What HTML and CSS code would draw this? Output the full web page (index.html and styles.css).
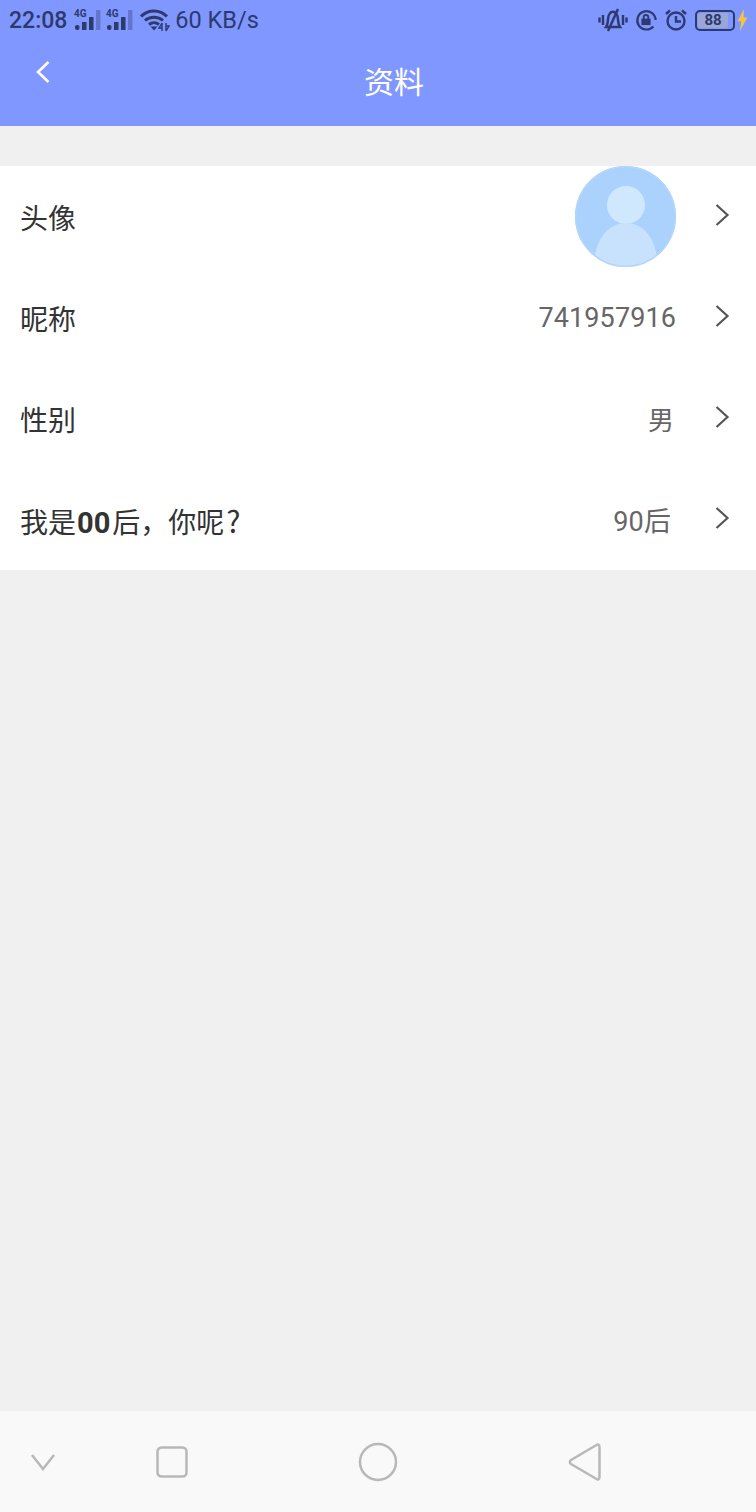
FILE: index.html
```html
<!DOCTYPE html>
<html lang="zh-CN">
<head>
<meta charset="UTF-8" />
<meta name="viewport" content="width=device-width, initial-scale=1" />
<title>资料</title>
<link rel="stylesheet" href="styles.css">
</head>
<body>

<header class="top">
  <div class="status">
    <span class="time">22:08</span>
    <svg class="sig" width="27" height="24" viewBox="0 0 27 24">
      <text x="0" y="9" class="sig-label">4G</text>
      <rect x="1" y="17" width="4.500" height="5" rx="2"/>
      <rect x="8" y="14" width="4.500" height="8"/>
      <rect x="15" y="9" width="4.500" height="13"/>
      <rect x="22" y="2" width="4.500" height="20" opacity=".35"/>
    </svg>
    <svg class="sig" width="27" height="24" viewBox="0 0 27 24">
      <text x="0" y="9" class="sig-label">4G</text>
      <rect x="1" y="17" width="4.500" height="5" rx="2"/>
      <rect x="8" y="14" width="4.500" height="8"/>
      <rect x="15" y="9" width="4.500" height="13"/>
      <rect x="22" y="2" width="4.500" height="20" opacity=".35"/>
    </svg>
    <svg class="wifi" width="30" height="24" viewBox="0 0 30 24">
      <path d="M1 8.500C8 1 20 1 27 8.500M5 12.500C10 8 18 8 23 12.500M9 16.500C12 14 16 14 19 16.500" fill="none" stroke="#2c3a6e" stroke-width="3"/>
      <path d="M10.500 18.500L17.500 18.500L14 22.500Z" fill="#2c3a6e"/>
      <path d="M22 15V23M22 15L19 20H22M26 15V23M26 23L29 18H26" fill="none" stroke="#2c3a6e" stroke-width="1.400"/>
    </svg>
    <span class="speed">60 KB/s</span>
    <div class="status-right">
      <svg width="30" height="24" viewBox="0 0 30 24" fill="none" stroke="#2c3a6e" stroke-width="2.400">
        <path d="M8 19C11 15 9 9 11.500 6C13 3 17 3 18.500 6C21 9 19 15 22 19Z"/>
        <path d="M20 1L10 23"/>
        <path d="M5 7V17M1.500 9.500V14.500M25 7V17M28.500 9.500V14.500"/>
      </svg>
      <svg width="22" height="22" viewBox="0 0 24 24" fill="none" stroke="#2c3a6e" stroke-width="2.400">
        <path d="M20 19A10 10 0 1 1 22.500 12"/>
        <rect x="7" y="10.500" width="10" height="7" fill="#2c3a6e" stroke="none"/>
        <path d="M9.500 11V9A2.500 2.500 0 0 1 14.500 9V11" stroke-width="2"/>
      </svg>
      <svg width="24" height="24" viewBox="0 0 24 24" fill="none" stroke="#2c3a6e" stroke-width="2.400">
        <circle cx="12" cy="13" r="8.500"/>
        <path d="M12 8V13.500H17M2 6L6 2.500M22 6L18 2.500"/>
      </svg>
      <div class="batt"><span class="batt-num">88</span></div>
      <svg class="bolt" width="11" height="22" viewBox="0 0 8 18"><path d="M5 0L0 10H3L2 18L8 7H5Z" fill="#f5c242"/></svg>
    </div>
  </div>
  <div class="title-bar">
    <svg class="back" width="16" height="24" viewBox="0 0 16 24" fill="none" stroke="#fff" stroke-width="2.600">
      <path d="M13.500 2L3 12L13.500 22"/>
    </svg>
    <h1>资料</h1>
  </div>
</header>

<main class="list">
  <div class="row">
    <span class="label">头像</span>
    <div class="avatar">
      <svg width="101" height="101" viewBox="0 0 101 101">
        <clipPath id="avatarClip"><circle cx="50.500" cy="50.500" r="50.500"/></clipPath>
        <circle cx="50.500" cy="50.500" r="50.500" fill="#abd2fd"/>
        <circle cx="51" cy="39" r="19" fill="#d0e8fe"/>
        <path clip-path="url(#avatarClip)" d="M19 101C19 74 33 57 51 57C69 57 83 74 82 101Z" fill="#c8e2fd"/>
        <circle cx="50.500" cy="50.500" r="49.750" fill="none" stroke="#b3d6fc" stroke-width="1.500"/>
      </svg>
    </div>
    <svg class="arrow" width="16" height="24" viewBox="0 0 16 24"><path d="M2.500 2L13.500 12L2.500 22"/></svg>
  </div>
  <div class="row">
    <span class="label">昵称</span>
    <span class="value">741957916</span>
    <svg class="arrow" width="16" height="24" viewBox="0 0 16 24"><path d="M2.500 2L13.500 12L2.500 22"/></svg>
  </div>
  <div class="row">
    <span class="label">性别</span>
    <span class="value value-gender">男</span>
    <svg class="arrow" width="16" height="24" viewBox="0 0 16 24"><path d="M2.500 2L13.500 12L2.500 22"/></svg>
  </div>
  <div class="row">
    <span class="label">我是<b>00</b>后，你呢<span class="qmark">?</span></span>
    <span class="value value-age">90后</span>
    <svg class="arrow" width="16" height="24" viewBox="0 0 16 24"><path d="M2.500 2L13.500 12L2.500 22"/></svg>
  </div>
</main>

<nav class="nav-bar">
  <svg width="26" height="18" viewBox="0 0 26 18" class="nav-down"><path d="M2 2L13 16L24 2"/></svg>
  <svg width="32" height="32" viewBox="0 0 32 32" class="nav-square"><rect x="1.500" y="1.500" width="29" height="29" rx="4"/></svg>
  <svg width="40" height="40" viewBox="0 0 40 40" class="nav-circle"><circle cx="20" cy="20" r="18"/></svg>
  <svg width="34" height="38" viewBox="0 0 34 38" class="nav-back"><path d="M28.500 2C30 1 31.500 2 31.500 4V34C31.500 36 30 37 28.500 36L3 21C1.500 20 1.500 18 3 17Z"/></svg>
</nav>

</body>
</html>
```

FILE: styles.css
```css
html, body {
  height: 100%;
}
body {
  margin: 0;
  background: #f0f0f0;
  font-family: Roboto, "Noto Sans CJK SC", sans-serif;
  display: flex;
  flex-direction: column;
  min-height: 1512px;
}

/* Top bar */
.top {
  background: #7f97ff;
  height: 126px;
  margin-bottom: 40px;
}
.status {
  height: 38px;
  box-sizing: border-box;
  padding: 2px 8px 0 9px;
  display: flex;
  align-items: center;
  color: #2c3a6e;
}
.time {
  font-size: 23px;
  font-weight: 500;
  margin-right: 7px;
}
.sig {
  margin-right: 5px;
  fill: #2c3a6e;
}
.sig-label {
  font-family: Roboto, sans-serif;
  font-size: 10px;
  font-weight: 700;
}
.wifi {
  margin: 0 5px 0 2px;
}
.speed {
  font-size: 23.500px;
}
.status-right {
  margin-left: auto;
  display: flex;
  align-items: center;
  gap: 7px;
}
.batt {
  width: 40px;
  height: 21px;
  box-sizing: border-box;
  border: 2px solid #2c3a6e;
  border-radius: 5px;
  padding: 1px;
  display: flex;
}
.batt-num {
  width: 30px;
  background: #9aa6d6;
  border-radius: 2px;
  font-size: 15px;
  line-height: 15px;
  font-weight: 700;
  text-align: center;
}
.bolt {
  margin-left: -5px;
}
.title-bar {
  display: flex;
  align-items: center;
  height: 84px;
}
.back {
  margin: -16px 0 0 35px;
}
.title-bar h1 {
  margin: 0 0 0 313px;
  font-size: 30px;
  font-weight: 400;
  color: #fff;
  font-family: "Noto Sans CJK SC", sans-serif;
}

/* Rows */
.list {
  background: #fff;
}
.row {
  height: 101px;
  display: flex;
  align-items: center;
  padding: 0 26px 0 20px;
}
.label {
  font-size: 28px;
  color: #333;
  font-family: "Noto Sans CJK SC", sans-serif;
}
.label b {
  font-family: Roboto, sans-serif;
  font-size: 29px;
  margin: 0 2px 0 1px;
}
.qmark {
  margin-left: 2px;
  font-size: 30px;
}
.value {
  margin-left: auto;
  font-size: 27px;
  letter-spacing: .1px;
  color: #666;
}
.value-gender {
  margin-right: 2px;
  font-family: "Noto Sans CJK SC", sans-serif;
  font-size: 26px;
}
.value-age {
  margin-right: 5px;
}
.avatar {
  margin-left: auto;
  height: 101px;
}
.arrow {
  margin: -4px 0 0 38px;
  fill: none;
  stroke: #555;
  stroke-width: 2.200;
}

/* Android nav */
.nav-bar {
  margin-top: auto;
  height: 101px;
  background: #f9f9f9;
  display: flex;
  align-items: center;
  padding-left: 30px;
}
.nav-bar svg {
  fill: none;
  stroke: #b8b8b8;
  stroke-width: 2.500;
}
.nav-square {
  margin-left: 100px;
}
.nav-circle {
  margin-left: 170px;
}
.nav-back {
  margin-left: 170px;
}
```
